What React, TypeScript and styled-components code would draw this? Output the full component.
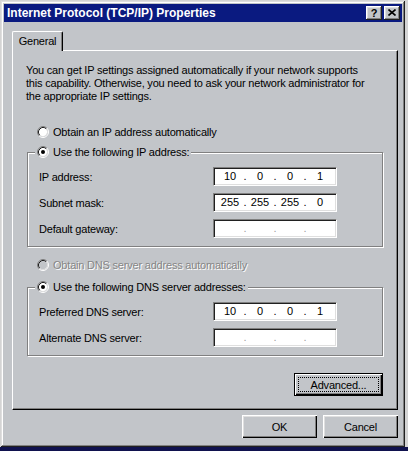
import styled, { createGlobalStyle } from "styled-components";

const FACE = "#c2c5c9";

const GlobalStyle = createGlobalStyle`
  html, body {
    margin: 0;
    padding: 0;
  }
  body {
    width: 408px;
    height: 451px;
    overflow: hidden;
    font-family: "Liberation Sans", Arial, sans-serif;
    font-size: 11px;
    letter-spacing: -0.2px;
    color: #000;
    background: linear-gradient(to bottom, #d4d4d4 0, #d4d4d4 447px, #10124e 447px);
  }
`;

const Screen = styled.div`
  width: 408px;
  height: 451px;
  padding: 1px 0 0 1px;
  box-sizing: border-box;
`;

const Dialog = styled.div`
  width: 404px;
  height: 446px;
  box-sizing: border-box;
  padding: 3px;
  background: ${FACE};
  box-shadow: inset -1px -1px #202020, inset 1px 1px #dfdfdf, inset -2px -2px #808080,
    inset 2px 2px #fff;
  display: flex;
  flex-direction: column;
`;

const TitleBar = styled.div`
  height: 18px;
  background: #0a1a80;
  display: flex;
  align-items: center;
  padding: 0 2px 0 3px;
  color: #fff;
  font-weight: bold;
  font-size: 12px;
  letter-spacing: 0;
`;

const TitleText = styled.span`
  flex: 1;
  white-space: nowrap;
`;

const CaptionButtons = styled.div`
  display: flex;
  gap: 2px;
`;

const CaptionButton = styled.div`
  width: 16px;
  height: 14px;
  box-sizing: border-box;
  background: ${FACE};
  box-shadow: inset -1px -1px #202020, inset 1px 1px #fff, inset -2px -2px #808080,
    inset 2px 2px #dfdfdf;
  display: flex;
  align-items: center;
  justify-content: center;
  color: #000;
  font-weight: bold;
  font-size: 11px;
  line-height: 14px;
  padding-bottom: 1px;
`;

const Body = styled.div`
  padding: 9px 0 0 8px;
  display: flex;
  flex-direction: column;
`;

const TabStrip = styled.div`
  display: flex;
  height: 20px;
`;

const Tab = styled.div`
  position: relative;
  z-index: 1;
  width: 51px;
  height: 20px;
  box-sizing: border-box;
  background: ${FACE};
  border-left: 1px solid #fff;
  border-top: 1px solid #fff;
  border-right: 1px solid #000;
  border-top-left-radius: 2px;
  border-top-right-radius: 2px;
  box-shadow: inset -1px 0 #808080;
  display: flex;
  justify-content: center;
  padding-top: 3px;
`;

const Panel = styled.div`
  margin-top: -1px;
  width: 386px;
  height: 360px;
  box-sizing: border-box;
  border-top: 1px solid #fff;
  border-left: 1px solid #fff;
  border-right: 1px solid #000;
  border-bottom: 1px solid #000;
  box-shadow: inset -1px -1px #808080;
  padding: 13px 0 0 13px;
  display: flex;
  flex-direction: column;
`;

const Intro = styled.p`
  margin: 0;
  line-height: 13px;
`;

const RadioRow = styled.div<{ $top: number }>`
  display: flex;
  align-items: center;
  gap: 4px;
  height: 16px;
  margin: ${(p) => p.$top}px 0 0 11px;
`;

const RadioLabel = styled.span<{ $disabled?: boolean }>`
  white-space: nowrap;
  color: ${(p) => (p.$disabled ? "#868686" : "#000")};
  text-shadow: ${(p) => (p.$disabled ? "1px 1px #fff" : "none")};
`;

const GroupBox = styled.div<{ $top: number }>`
  margin: ${(p) => p.$top}px 0 0 1px;
  width: 356px;
  box-sizing: border-box;
  border: 1px solid #808080;
  box-shadow: inset 1px 1px #fff, 1px 1px #fff;
  padding-bottom: 8px;
  display: flex;
  flex-direction: column;
  gap: 7px;
`;

const Legend = styled.div`
  align-self: flex-start;
  margin: -9px 0 0 7px;
  padding: 0 2px;
  height: 16px;
  background: ${FACE};
  display: flex;
  align-items: center;
  gap: 4px;
  white-space: nowrap;
`;

const FieldRow = styled.div`
  display: flex;
  align-items: center;
  height: 19px;
  padding-left: 11px;
`;

const FieldLabel = styled.span`
  width: 174px;
`;

const IpBox = styled.div`
  width: 124px;
  height: 19px;
  box-sizing: border-box;
  background: #fff;
  border-top: 1px solid #808080;
  border-left: 1px solid #808080;
  border-bottom: 1px solid #fff;
  border-right: 1px solid #fff;
  box-shadow: inset 1px 1px #202020, inset -1px -1px #dfdfdf;
  padding-left: 3px;
  display: flex;
  align-items: center;
  line-height: 17px;
  letter-spacing: 0;
`;

const IpPart = styled.span`
  width: 26px;
  text-align: center;
`;

const IpDot = styled.span<{ $empty?: boolean }>`
  width: 4px;
  text-align: center;
  color: ${(p) => (p.$empty ? "#a0a0a0" : "#000")};
`;

const PanelFooter = styled.div`
  margin: 17px 0 0 1px;
  width: 356px;
  display: flex;
  justify-content: flex-end;
`;

const Button = styled.button<{ $width: number; $default?: boolean }>`
  width: ${(p) => p.$width}px;
  height: 23px;
  box-sizing: border-box;
  padding: 0;
  margin: 0;
  font-family: "Liberation Sans", Arial, sans-serif;
  font-size: 11px;
  letter-spacing: -0.2px;
  color: #000;
  background: ${FACE};
  border: ${(p) => (p.$default ? "1px solid #000" : "none")};
  box-shadow: ${(p) =>
    p.$default
      ? "inset 1px 1px #fff, inset -1px -1px #000, inset -2px -2px #808080"
      : "inset 1px 1px #fff, inset -1px -1px #000, inset -2px -2px #808080, inset 2px 2px #dfdfdf"};
  outline: ${(p) => (p.$default ? "1px dotted #000" : "none")};
  outline-offset: -5px;
`;

const DialogButtons = styled.div`
  margin-top: 5px;
  width: 386px;
  display: flex;
  justify-content: flex-end;
  gap: 6px;
`;

const Radio = ({ checked, disabled }: { checked?: boolean; disabled?: boolean }) => (
  <svg width="12" height="12" viewBox="0 0 12 12">
    <circle cx="6" cy="6" r="4.2" fill={disabled ? FACE : "#fff"} />
    <path d="M2.11 9.89A5.5 5.5 0 0 1 9.89 2.11" stroke="#808080" fill="none" />
    <path d="M9.89 2.11A5.5 5.5 0 0 1 2.11 9.89" stroke="#fff" fill="none" />
    <path d="M2.82 9.18A4.5 4.5 0 0 1 9.18 2.82" stroke="#202020" fill="none" />
    <path d="M9.18 2.82A4.5 4.5 0 0 1 2.82 9.18" stroke="#dfdfdf" fill="none" />
    {checked && <circle cx="6" cy="6" r="2" fill="#000" />}
  </svg>
);

const IpField = ({ parts }: { parts?: string[] }) => {
  const values = parts ?? ["", "", "", ""];
  return (
    <IpBox>
      {values.map((v, i) => (
        <span key={i} style={{ display: "contents" }}>
          {i > 0 && <IpDot $empty={!parts}>.</IpDot>}
          <IpPart>{v}</IpPart>
        </span>
      ))}
    </IpBox>
  );
};

export default function App() {
  return (
    <>
      <GlobalStyle />
      <Screen>
        <Dialog>
          <TitleBar>
            <TitleText>Internet Protocol (TCP/IP) Properties</TitleText>
            <CaptionButtons>
              <CaptionButton>?</CaptionButton>
              <CaptionButton>
                <svg width="8" height="7" viewBox="0 0 8 7">
                  <path d="M0.5 0.5L7.5 6.5M7.5 0.5L0.5 6.5" stroke="#000" strokeWidth="1.6" />
                </svg>
              </CaptionButton>
            </CaptionButtons>
          </TitleBar>
          <Body>
            <TabStrip>
              <Tab>General</Tab>
            </TabStrip>
            <Panel>
              <Intro>
                You can get IP settings assigned automatically if your network supports
                <br />
                this capability. Otherwise, you need to ask your network administrator for
                <br />
                the appropriate IP settings.
              </Intro>

              <RadioRow $top={21}>
                <Radio />
                <RadioLabel>Obtain an IP address automatically</RadioLabel>
              </RadioRow>

              <GroupBox $top={12}>
                <Legend>
                  <Radio checked />
                  <RadioLabel>Use the following IP address:</RadioLabel>
                </Legend>
                <FieldRow>
                  <FieldLabel>IP address:</FieldLabel>
                  <IpField parts={["10", "0", "0", "1"]} />
                </FieldRow>
                <FieldRow>
                  <FieldLabel>Subnet mask:</FieldLabel>
                  <IpField parts={["255", "255", "255", "0"]} />
                </FieldRow>
                <FieldRow>
                  <FieldLabel>Default gateway:</FieldLabel>
                  <IpField />
                </FieldRow>
              </GroupBox>

              <RadioRow $top={10}>
                <Radio disabled />
                <RadioLabel $disabled>Obtain DNS server address automatically</RadioLabel>
              </RadioRow>

              <GroupBox $top={14}>
                <Legend>
                  <Radio checked />
                  <RadioLabel>Use the following DNS server addresses:</RadioLabel>
                </Legend>
                <FieldRow>
                  <FieldLabel>Preferred DNS server:</FieldLabel>
                  <IpField parts={["10", "0", "0", "1"]} />
                </FieldRow>
                <FieldRow>
                  <FieldLabel>Alternate DNS server:</FieldLabel>
                  <IpField />
                </FieldRow>
              </GroupBox>

              <PanelFooter>
                <Button $width={89} $default>
                  Advanced...
                </Button>
              </PanelFooter>
            </Panel>
            <DialogButtons>
              <Button $width={75}>OK</Button>
              <Button $width={75}>Cancel</Button>
            </DialogButtons>
          </Body>
        </Dialog>
      </Screen>
    </>
  );
}
